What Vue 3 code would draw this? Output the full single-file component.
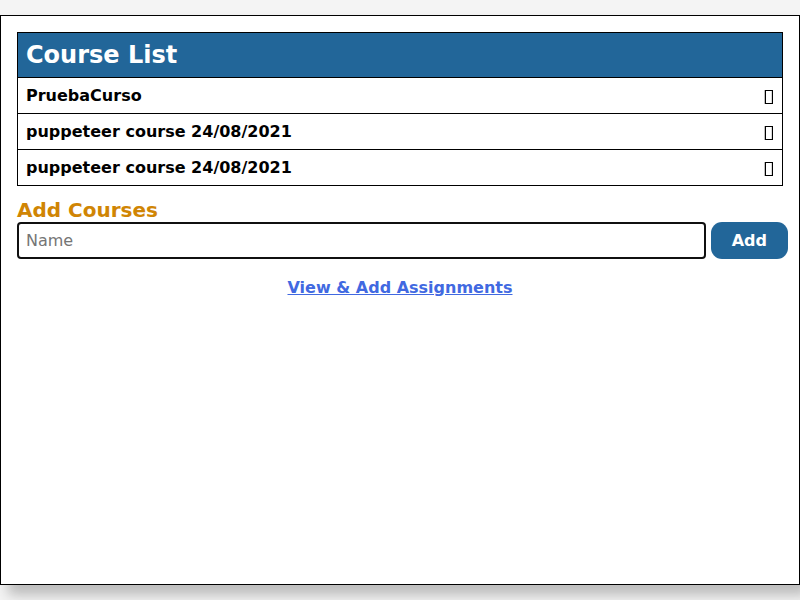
<script setup>
import { ref } from 'vue'

const courses = ref([
  { id: 1, name: 'PruebaCurso' },
  { id: 2, name: 'puppeteer course 24/08/2021' },
  { id: 3, name: 'puppeteer course 24/08/2021' }
])
const name = ref('')

function addCourse() {
  const value = name.value.trim()
  if (!value) return
  courses.value.push({ id: Date.now(), name: value })
  name.value = ''
}

function removeCourse(id) {
  courses.value = courses.value.filter((course) => course.id !== id)
}
</script>

<template>
  <main class="panel">
    <section class="courses">
      <h1 class="courses-title">Course List</h1>
      <ul class="course-list">
        <li v-for="course in courses" :key="course.id" class="course">
          <span>{{ course.name }}</span>
          <button class="remove" type="button" aria-label="Remove course" @click="removeCourse(course.id)">
            <svg width="10" height="14" viewBox="0 0 10 14" aria-hidden="true">
              <path fill="#000" fill-rule="evenodd" d="M.75 0H9V14H.75ZM2 1V13H7.85V1Z" />
            </svg>
          </button>
        </li>
      </ul>
    </section>

    <form class="add-form" @submit.prevent="addCourse">
      <label class="add-label" for="course-name">Add Courses</label>
      <div class="add-row">
        <input id="course-name" v-model="name" class="add-input" type="text" placeholder="Name" />
        <button class="add-button" type="submit">Add</button>
      </div>
    </form>

    <nav class="links">
      <a class="link" href="#assignments">View &amp; Add Assignments</a>
    </nav>
  </main>
</template>

<style>
body {
  background: #f4f4f4;
}
</style>

<style scoped>
.panel {
  box-sizing: border-box;
  min-height: calc(100vh - 30px);
  margin: 15px 0;
  padding: 16px;
  border: 1px solid #000;
  background: #fff;
  box-shadow: 8px 10px 12px #bbb;
  color: #000;
  font-family: "DejaVu Sans", sans-serif;
  font-size: 16px;
  line-height: 19px;
}

.courses {
  border: 1px solid #000;
}

.courses-title {
  margin: 0;
  padding: 8px;
  background: #226699;
  color: #fff;
  font-size: 24px;
  line-height: 28px;
}

.course-list {
  margin: 0;
  padding: 0;
  list-style: none;
}

.course {
  display: flex;
  align-items: center;
  justify-content: space-between;
  padding: 8px;
  border-top: 1px solid #000;
  font-weight: bold;
}

.remove {
  display: flex;
  padding: 4px 0 1px;
  border: 0;
  background: none;
  cursor: pointer;
}

.add-form {
  margin-top: 12px;
}

.add-label {
  display: block;
  color: #d08504;
  font-size: 20px;
  font-weight: bold;
  line-height: 24px;
}

.add-row {
  display: flex;
  gap: 5px;
  margin-right: -5px;
}

.add-input {
  box-sizing: border-box;
  flex: 1;
  min-width: 0;
  padding: 7px;
  border: 2px solid #101010;
  border-radius: 4px;
  outline: none;
  background: #fff;
  font: inherit;
}

.add-input::placeholder {
  color: #757575;
}

.add-button {
  padding: 9px 21px;
  border: 0;
  border-radius: 11px;
  background: #226699;
  color: #fff;
  font: inherit;
  font-weight: bold;
  cursor: pointer;
}

.links {
  margin-top: 19px;
  text-align: center;
}

.link {
  color: #4169e1;
  font-weight: bold;
}
</style>
